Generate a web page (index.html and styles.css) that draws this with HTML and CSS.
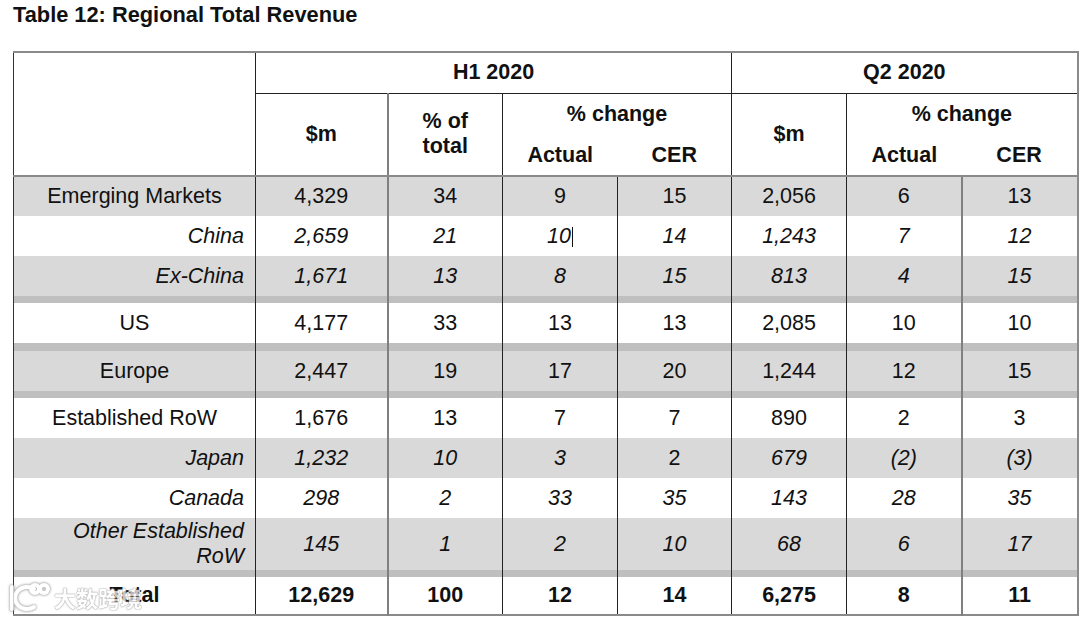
FILE: index.html
```html
<!DOCTYPE html>
<html lang="en">
<head>
<meta charset="utf-8">
<title>Table 12: Regional Total Revenue</title>
<link rel="stylesheet" href="styles.css">
</head>
<body>
<div class="page">
  <h1 class="title">Table 12: Regional Total Revenue</h1>
  <table class="rev">
    <colgroup>
      <col class="w-label"><col class="w-a"><col class="w-b"><col class="w-b"><col class="w-c"><col class="w-b"><col class="w-b"><col class="w-d">
    </colgroup>
    <thead>
      <tr class="h1row">
        <th class="h-label" rowspan="3"></th>
        <th class="h-period h-h1" colspan="4">H1 2020</th>
        <th class="h-period" colspan="3">Q2 2020</th>
      </tr>
      <tr class="h2row">
        <th class="h-m" rowspan="2">$m</th>
        <th class="h-pct" rowspan="2">% of<br>total</th>
        <th class="h-chg h-chg1" colspan="2">% change</th>
        <th class="h-m2" rowspan="2">$m</th>
        <th class="h-chg" colspan="2">% change</th>
      </tr>
      <tr class="h3row">
        <th class="h-sub h-act">Actual</th>
        <th class="h-sub h-cer1">CER</th>
        <th class="h-sub h-act">Actual</th>
        <th class="h-sub">CER</th>
      </tr>
    </thead>
    <tbody>
      <tr class="r gray">
        <td class="lab">Emerging Markets</td><td>4,329</td><td>34</td><td>9</td><td>15</td><td>2,056</td><td>6</td><td>13</td>
      </tr>
      <tr class="r it">
        <td class="lab sub">China</td><td>2,659</td><td>21</td><td>10<span class="caret"></span></td><td>14</td><td>1,243</td><td>7</td><td>12</td>
      </tr>
      <tr class="r gray it">
        <td class="lab sub">Ex-China</td><td>1,671</td><td>13</td><td>8</td><td>15</td><td>813</td><td>4</td><td>15</td>
      </tr>
      <tr class="sep"><td></td><td></td><td></td><td></td><td></td><td></td><td></td><td></td></tr>
      <tr class="r">
        <td class="lab">US</td><td>4,177</td><td>33</td><td>13</td><td>13</td><td>2,085</td><td>10</td><td>10</td>
      </tr>
      <tr class="sep sep-wide"><td></td><td></td><td></td><td></td><td></td><td></td><td></td><td></td></tr>
      <tr class="r gray">
        <td class="lab">Europe</td><td>2,447</td><td>19</td><td>17</td><td>20</td><td>1,244</td><td>12</td><td>15</td>
      </tr>
      <tr class="sep"><td></td><td></td><td></td><td></td><td></td><td></td><td></td><td></td></tr>
      <tr class="r">
        <td class="lab">Established RoW</td><td>1,676</td><td>13</td><td>7</td><td>7</td><td>890</td><td>2</td><td>3</td>
      </tr>
      <tr class="r gray it">
        <td class="lab sub">Japan</td><td>1,232</td><td>10</td><td>3</td><td class="up">2</td><td>679</td><td>(2)</td><td>(3)</td>
      </tr>
      <tr class="r it">
        <td class="lab sub">Canada</td><td>298</td><td>2</td><td>33</td><td>35</td><td>143</td><td>28</td><td>35</td>
      </tr>
      <tr class="r tall gray it">
        <td class="lab sub">Other Established<br>RoW</td><td>145</td><td>1</td><td>2</td><td>10</td><td>68</td><td>6</td><td>17</td>
      </tr>
      <tr class="sep"><td></td><td></td><td></td><td></td><td></td><td></td><td></td><td></td></tr>
      <tr class="r total">
        <td class="lab">Total</td><td>12,629</td><td>100</td><td>12</td><td>14</td><td>6,275</td><td>8</td><td>11</td>
      </tr>
    </tbody>
  </table>
  <div class="wm">
    <svg class="wm-logo" width="42" height="32" viewBox="0 0 42 32">
      <path d="M4 6 V28" />
      <path d="M26 8 A12 11 0 1 0 26 26" />
      <circle cx="27" cy="8" r="4" />
      <circle cx="36" cy="8" r="4" />
    </svg>
    <span class="wm-text">大数跨境</span>
  </div>
</div>
</body>
</html>
```
FILE: styles.css
```css
html, body {
  margin: 0;
  padding: 0;
  background: #ffffff;
}

.page {
  position: relative;
  padding: 2px 0 0 13px;
  font-family: "Liberation Sans", Arial, sans-serif;
  color: #111111;
}

.title {
  margin: 0 0 24px 0;
  font-size: 21.8px;
  line-height: 25px;
  font-weight: bold;
}

.rev {
  border-collapse: collapse;
  table-layout: fixed;
  width: 1064px;
  font-size: 21.5px;
  line-height: 25px;
  border-top: 2px solid #8a8a8a;
  border-right: 2px solid #8a8a8a;
  border-bottom: 2px solid #8a8a8a;
  border-left: 1px solid #333333;
}

.w-label { width: 242px; }
.w-a { width: 132px; }
.w-b { width: 115px; }
.w-c { width: 114px; }
.w-d { width: 116px; }

.rev th {
  font-weight: bold;
  padding: 0;
  text-align: center;
  vertical-align: middle;
}

.h1row { height: 41px; }
.h2row { height: 42px; }
.h3row { height: 41px; }

.h-label {
  border-right: 1px solid #222222;
  border-bottom: 2px solid #8a8a8a;
}

.h-period {
  border-bottom: 1px solid #222222;
}

.h-h1 {
  border-right: 1px solid #222222;
}

.h-m {
  border-right: 2px solid #808080;
  border-bottom: 2px solid #8a8a8a;
}

.h-pct {
  border-right: 1px solid #222222;
  border-bottom: 2px solid #8a8a8a;
}

.h-chg {
  vertical-align: bottom;
  padding-bottom: 6px;
}

.h-chg1 {
  border-right: 1px solid #222222;
}

.h-m2 {
  border-left: 1px solid #222222;
  border-right: 1px solid #222222;
  border-bottom: 2px solid #8a8a8a;
}

.h-sub {
  border-bottom: 2px solid #8a8a8a;
  vertical-align: top;
  padding-top: 7px;
}

.h-cer1 {
  border-right: 1px solid #222222;
}

.rev td {
  padding: 0;
  text-align: center;
  vertical-align: middle;
  white-space: nowrap;
}

.rev tbody td:nth-child(n+2) {
  border-left: 1px solid #222222;
}

.rev tbody td:nth-child(3),
.rev tbody td:nth-child(8) {
  border-left: 2px solid #808080;
}

.r { height: 40px; }
.r.tall { height: 52px; }
.r.total { height: 38px; }

.gray td { background: #d9d9d9; }

.sep td {
  height: 7px;
  padding: 0;
  background: #bfbfbf;
  font-size: 0;
  line-height: 0;
}

.sep-wide td {
  height: 8px;
}

.it td { font-style: italic; }
.it td.up { font-style: normal; }

.lab.sub {
  text-align: right;
  padding-right: 11px;
}

.total td { font-weight: bold; }

.caret {
  display: inline-block;
  width: 1px;
  height: 20px;
  margin-left: 1px;
  background: #111111;
  vertical-align: -4px;
}

.wm {
  position: absolute;
  left: 8px;
  top: 581px;
  display: flex;
  align-items: center;
  gap: 4px;
  opacity: 0.75;
}

.wm-logo path,
.wm-logo circle {
  fill: none;
  stroke: #ffffff;
  stroke-width: 4;
  stroke-linecap: round;
}

.wm-logo {
  filter: drop-shadow(0 0 1px #9a9a9a) drop-shadow(0 0 1px #9a9a9a);
}

.wm-text {
  font-family: "Noto Sans CJK SC", sans-serif;
  font-size: 22px;
  font-weight: bold;
  line-height: 30px;
  color: #ffffff;
  text-shadow: 0 0 1px #8a8a8a, 0 0 1px #8a8a8a, 0 0 2px #9a9a9a;
}
```
